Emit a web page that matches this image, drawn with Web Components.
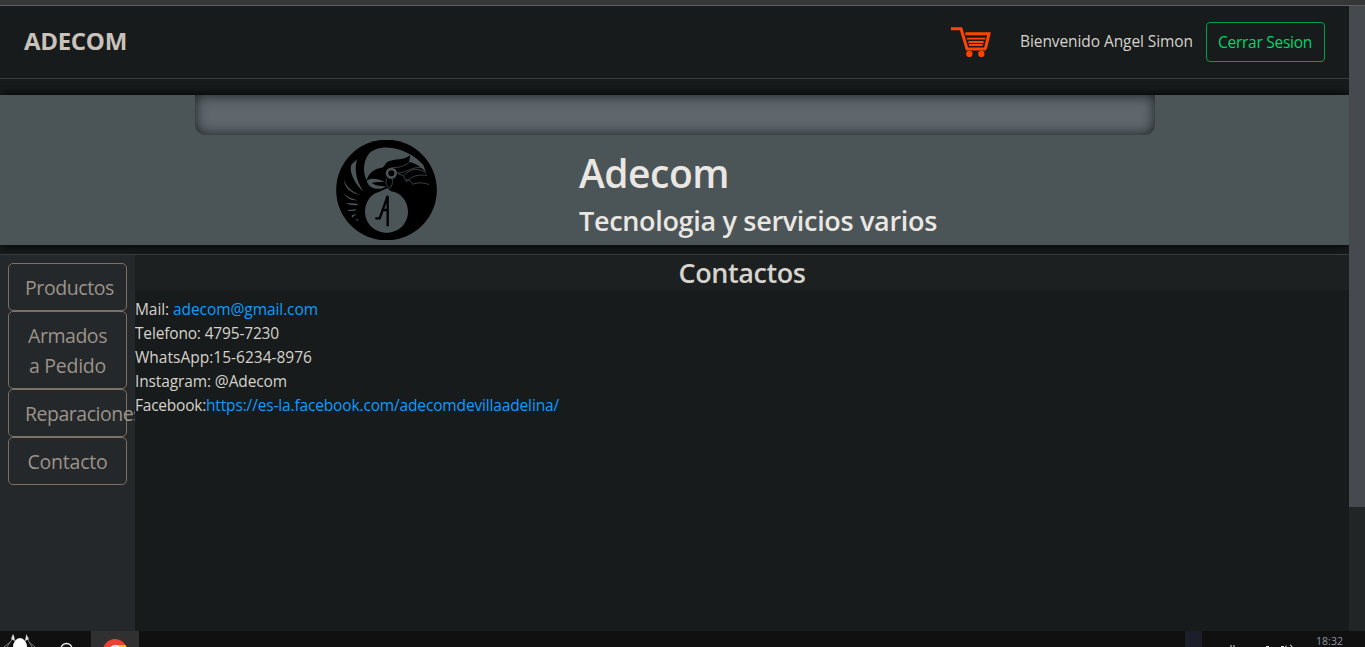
<!DOCTYPE html>
<html lang="es">
<head>
<meta charset="utf-8">
<title>Adecom</title>
<style>
html,body{margin:0;height:100%;overflow:hidden;background:#171b1b}
body{font-family:"Open Sans","Noto Sans",sans-serif;font-size:15.5px;line-height:24px;color:#d6d2cc}
</style>
</head>
<body>
<adecom-app></adecom-app>
<script>
function define(name, html, ready){
  const t=document.createElement('template');
  t.innerHTML=html;
  customElements.define(name, class extends HTMLElement{
    constructor(){super();this.attachShadow({mode:'open'}).appendChild(t.content.cloneNode(true));}
    connectedCallback(){if(ready)ready.call(this);}
  });
}

/* Single line of text tracked to a given advance width */
define('fit-text','<style>:host{display:inline-block;white-space:nowrap}</style><slot></slot>',function(){
  const target=parseFloat(this.getAttribute('w'));
  const r=document.createRange();
  r.selectNodeContents(this);
  const n=this.textContent.length;
  const w=r.getBoundingClientRect().width;
  if(w)this.style.letterSpacing=((target-w)/n)+'px';
});

define('cart-icon',`<style>:host{display:block;width:40px;height:30px}svg{display:block}</style>
<svg width="40" height="30" viewBox="0 0 120 90"><path d="M0 5H30L48 66H105" fill="none" stroke="#ff4500" stroke-width="9"/><path d="M43 20H114L103 66" fill="none" stroke="#ff4500" stroke-width="9"/><path d="M48 35H103M52 45H98M54 54H95" stroke="#ff4500" stroke-width="5.500"/><circle cx="55" cy="81" r="9.500" fill="#ff4500"/><circle cx="91" cy="81" r="9.500" fill="#ff4500"/></svg>`);

define('bird-logo',`<style>:host{display:block;width:101px;height:100px;color:#4b5457}svg{display:block}</style>
<svg width="101" height="100" viewBox="468 165 303 300"><circle cx="619.5" cy="315" r="151"/>
<g fill="currentColor"><path d="M560 286C547 260 550 226 568 205C590 184 630 184 662 195C688 204 712 220 730 240L738 262C724 246 708 235 687 231L691 210C673 227 645 220 623 230C614 236 616 243 606 248C583 250 565 265 560 286Z"/>
<path d="M560 287C575 277 598 281 614 292C604 291 589 290 575 294C590 304 608 303 618 305L608 310C580 316 564 303 560 287Z"/>
<path d="M594 322C604 317 615 313 622 309L633 319C661 322 684 348 684 380C684 415 656 443 620 443C584 443 555 415 555 380C555 352 572 328 594 322Z"/>
<path d="M531 223C523 250 527 286 550 319C523 297 505 255 515 238Z"/><path d="M493 284C497 304 514 318 540 330C513 325 490 305 493 284Z"/><path d="M490 323C500 335 514 341 535 346C514 347 499 340 490 323Z"/><path d="M498 354L533 356L533 360C519 362 507 360 498 354ZM504 375L527 373V377L505 378ZM515 391L530 387L516 398ZM526 405L537 401L532 407Z"/></g>
<circle cx="634" cy="265" r="13" fill="#000" stroke="currentColor" stroke-width="8"/>
<g fill="none" stroke="currentColor" stroke-width="2.2"><path d="M620 280C617 292 616 298 629 310C638 301 637 293 638 282M634 248C655 248 670 245 687 232M652 263C675 268 690 243 731 248M653 266L671 272C690 252 714 246 738 264M671 273L679 291C696 270 718 269 741 271M677 284L689 285L698 298C716 291 731 293 748 299"/></g>
<path d="M586 400H599L623 333V424M608 375H623" fill="none" stroke="#000" stroke-width="7"/></svg>`);

define('site-nav',`<style>
:host{display:flex;align-items:center;box-sizing:border-box;height:73px;padding:0 24px;border-bottom:1px solid #373c3e;background:#171b1b}
.brand{font-size:24px;font-weight:700;color:#c9c2ba;line-height:30px;flex:1;padding-bottom:2px}
cart-icon{margin-right:29px}
.user{padding-bottom:2px}
.out{box-sizing:border-box;width:119px;height:40px;border:1px solid #00a04b;border-radius:4px;padding:7px 0 0 11px;margin-left:13px;color:#00d66b;line-height:24px}
</style>
<div class="brand"><fit-text w="103">ADECOM</fit-text></div><cart-icon></cart-icon><div class="user"><fit-text w="173">Bienvenido Angel Simon</fit-text></div><div class="out"><fit-text w="94">Cerrar Sesion</fit-text></div>`);

define('site-banner',`<style>
:host{display:grid;grid-template-columns:195px 141px 243px 1fr;grid-template-rows:40px 110px;height:150px;margin-top:16px;background:#4b5457;box-shadow:0 0 10px 0 #000;color:#eae6e2;font-weight:600}
.bar{grid-column:2/5;width:960px;height:40px;background:#5f676d;border-radius:0 0 10px 10px;box-shadow:inset 0 0 13px 0 #181c1d}
bird-logo{grid-column:3;grid-row:2;margin-top:5px}
.t{grid-column:4;grid-row:2;padding-top:14px}
.a,.b{display:block}.a{font-size:39px;line-height:48px}.b{font-size:27px;line-height:34px;margin-top:7px}
</style><div class="bar"></div><bird-logo></bird-logo>
<div class="t"><div class="a"><fit-text w="150">Adecom</fit-text></div><div class="b"><fit-text w="358">Tecnologia y servicios varios</fit-text></div></div>`);

define('menu-item',`<style>:host{display:block;box-sizing:border-box;width:119px;padding:9px 16px 7px;border:1px solid #7c6f63;border-radius:5px;font-size:19.5px;line-height:30px;color:#9c9389;text-align:center}</style><slot></slot>`);

define('side-menu',`<style>:host{display:block;box-sizing:border-box;width:135px;padding:8px;background:#24282b;overflow:hidden}.l{text-align:left}</style>
<menu-item><fit-text w="89">Productos</fit-text></menu-item><menu-item><fit-text w="79">Armados</fit-text><br><fit-text w="77">a Pedido</fit-text></menu-item><menu-item class="l"><fit-text w="117">Reparaciones</fit-text></menu-item><menu-item><fit-text w="80">Contacto</fit-text></menu-item>`);

define('contact-list',`<style>:host{display:block;flex:1;background:#171b1b}
h2{margin:0 0 7px;height:35px;background:#1c2020;text-align:center;font-size:27px;font-weight:600;line-height:36px;color:#d6d2cc}
p{margin:0;height:24px}a{color:#0f9cff;text-decoration:none}</style>
<h2><fit-text w="127">Contactos</fit-text></h2>
<p><fit-text w="183">Mail: <a>adecom@gmail.com</a></fit-text></p><p><fit-text w="144">Telefono: 4795-7230</fit-text></p><p><fit-text w="177">WhatsApp:15-6234-8976</fit-text></p><p><fit-text w="152">Instagram: @Adecom</fit-text></p><p><fit-text w="71">Facebook:</fit-text><a><fit-text w="353">https://es-la.facebook.com/adecomdevillaadelina/</fit-text></a></p>`);

define('task-bar',`<style>:host{display:flex;height:16px;background:#101010;overflow:hidden}svg{display:block;flex:none}
.sp{flex:1}.q{width:17px;background:#1c1f2a}.clock{font-size:10.5px;line-height:20px;color:#8f93a3;width:49px}</style>
<svg width="139" height="16" viewBox="0 0 139 16"><rect x="91" width="48" height="16" fill="#303030"/><path d="M4 16L10 11M35 16L29 11M7 16L13 7M32 16L27 7" stroke="#777" fill="none"/><path d="M13 3L11 8L15 10L14 5ZM26 3L29 8L25 10L26 5Z" fill="#ddd"/><ellipse cx="20" cy="16" rx="7" ry="9" fill="#fff"/><circle cx="66.500" cy="18" r="5.500" fill="none" stroke="#eee" stroke-width="1.400"/><circle cx="115" cy="20" r="12" fill="#ea4335"/><path d="M115 14H125.500L126.500 16H115Z" fill="#fbbc05"/><circle cx="115" cy="20" r="6" fill="#fff"/><circle cx="115" cy="20" r="4.600" fill="#4285f4"/></svg>
<div class="sp" style="max-width:1046px"></div><div class="q"></div>
<svg width="114" height="16" viewBox="0 0 114 16"><path d="M29 14V16M32 14V16M64 15.500H67M79 15.500H82M84 14.500V16M88 14Q90 14.500 90 16" stroke="#ddd" fill="none"/></svg>
<div class="clock"><fit-text w="27">18:32</fit-text></div>`);

define('adecom-app',`<style>
:host{display:grid;grid-template-rows:6px 625px 16px;width:1365px;height:647px;overflow:hidden}
.top{box-sizing:border-box;background:#363636;border-bottom:1px solid #5d6060}
.view{display:grid;grid-template-columns:1349px 16px;overflow:hidden}
.page{display:flex;flex-direction:column;overflow:hidden}
.main{display:flex;flex:1;margin-top:9px;border-top:1px solid #363c3d;position:relative}
.scroll{background:#212525}.thumb{height:501px;background:#464a4e}
</style>
<div class="top"></div>
<div class="view"><div class="page"><site-nav></site-nav><site-banner></site-banner><div class="main"><side-menu></side-menu><contact-list></contact-list></div></div><div class="scroll"><div class="thumb"></div></div></div>
<task-bar></task-bar>`);
</script>
</body>
</html>
